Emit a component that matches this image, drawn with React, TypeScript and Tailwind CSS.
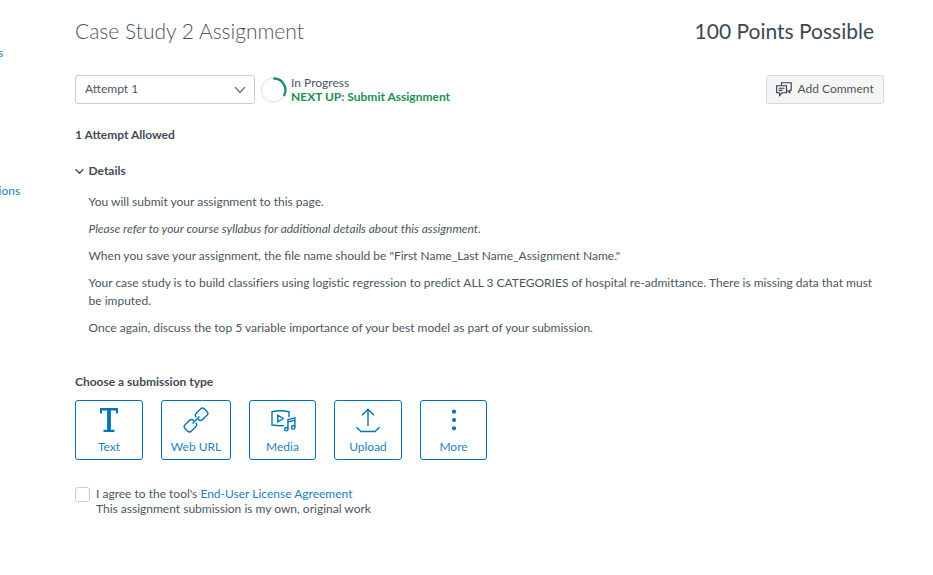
import React from "react";

function TypeButton({ label, width, children }: { label: string; width: string; children: React.ReactNode }) {
  return (
    <button className={`flex h-[60px] flex-col items-center rounded-[3px] border border-[#0374b5] bg-white pt-[6px] text-[#0374b5] ${width}`}>
      <svg width="26" height="26" viewBox="0 0 26 26" fill="none" stroke="currentColor" strokeWidth="1.4">
        {children}
      </svg>
      <span className="mt-[5px] text-[12px] leading-[18px] text-[#2383bd]">{label}</span>
    </button>
  );
}

export default function App() {
  return (
    <div className="flex h-[575px] w-[933px] overflow-hidden bg-white font-['Lato',sans-serif] text-[12px] leading-[18px] text-[#4a565f]">
      <nav className="flex w-[75px] shrink-0 flex-col pt-[44px] text-[#2383bd]">
        <a className="-ml-[2px]">s</a>
        <a className="mt-[120px] -ml-[1.5px]">ions</a>
      </nav>
      <main className="flex w-[809px] flex-col">
        <header className="flex h-[34px] items-start justify-between pt-[16px] pr-[10px] text-[21px] leading-[30px]">
          <h1 className="font-light">Case Study 2 Assignment</h1>
          <span className="text-[#3c4953]">100 Points Possible</span>
        </header>
        <div className="mt-[41px] flex h-[29px] items-center">
          <div className="flex h-[29px] w-[180px] items-center justify-between rounded-[3px] border border-[#c7cdd1] pr-[8px] pl-[9px]">
            <span className="-mt-[2px]">Attempt 1</span>
            <svg width="12" height="8" viewBox="0 0 12 8" fill="none" stroke="currentColor" strokeWidth="1.1">
              <path d="M1 1.2 6 6.4 11 1.2" />
            </svg>
          </div>
          <svg className="ml-[5px]" width="28" height="28" viewBox="0 0 28 28" fill="none">
            <circle cx="13.3" cy="14" r="11.9" stroke="#e3e6e8" strokeWidth="1.2" />
            <path d="M13.3 2.5A11.6 11.6 0 0 1 23.8 20" stroke="#16925a" strokeWidth="2.3" />
          </svg>
          <div className="ml-[3px] flex flex-col leading-[14px]">
            <span>In Progress</span>
            <span className="font-bold text-[#1a8e56]">NEXT UP: Submit Assignment</span>
          </div>
          <button className="ml-auto flex h-[29px] w-[118px] items-center rounded-[3px] border border-[#d7dadc] bg-[#f5f5f5] pl-[9px]">
            <svg width="16" height="15" viewBox="0 0 16 15" fill="none" stroke="#2d3b45" strokeWidth="1.1">
              <path d="M5.5 3.2V.8H15.2V8.3H13.8V10.6L11.4 8.3" />
              <path d="M.7 3.8H10.5V10.8H6L3.5 13.6V10.8H.7ZM2.7 6.2H8.5M2.7 8.4H6.5" />
            </svg>
            <span className="-mt-[2px] ml-[5.5px]">Add Comment</span>
          </button>
        </div>
        <div className="mt-[22px] font-bold text-[#3f4c55]">1 Attempt Allowed</div>
        <div className="mt-[18px] flex items-center font-bold text-[#3f4c55]">
          <svg width="9" height="7" viewBox="0 0 9 7" fill="none" stroke="currentColor" strokeWidth="1.3">
            <path d="M.6 1.2 4.5 5.2 8.4 1.2" />
          </svg>
          <span className="ml-[4.5px]">Details</span>
        </div>
        <section className="mt-[13px] ml-[13.5px] flex flex-col gap-[9px]">
          <p>You will submit your assignment to this page.</p>
          <p className="italic">Please refer to your course syllabus for additional details about this assignment.</p>
          <p>When you save your assignment, the file name should be "First Name_Last Name_Assignment Name."</p>
          <p className="tracking-[0.006px]">Your case study is to build classifiers using logistic regression to predict ALL 3 CATEGORIES of hospital re-admittance. There is missing data that must<br />be imputed.</p>
          <p>Once again, discuss the top 5 variable importance of your best model as part of your submission.</p>
        </section>
        <h2 className="mt-[36px] font-bold text-[#3f4c55]">Choose a submission type</h2>
        <div className="mt-[9px] flex gap-[18px]">
          <TypeButton label="Text" width="w-[68px]">
            <path fill="currentColor" stroke="none" d="M4 1H22V6.5H20V3.4H14.9V22.7H18.5V25H7.5V22.7H11.1V3.4H6V6.5H4Z" />
          </TypeButton>
          <TypeButton label="Web URL" width="w-[70px]">
            <path transform="translate(18.6 7.3) rotate(-45)" d="M-5.8 1V1.7Q-5.8 4.5-3 4.5H3Q5.8 4.5 5.8 1.7V-1.7Q5.8-4.5 3-4.5H-3Q-5.8-4.5-5.8-1.7" />
            <path transform="translate(7.4 18.7) rotate(135)" d="M-5.8 1V1.7Q-5.8 4.5-3 4.5H3Q5.8 4.5 5.8 1.7V-1.7Q5.8-4.5 3-4.5H-3Q-5.8-4.5-5.8-1.7" />
            <path d="M9.5 16.5 16.5 9.5" />
          </TypeButton>
          <TypeButton label="Media" width="w-[67px]">
            <path d="M14 18.6Q8 19 2 18V4.8Q10.5 2.8 19 4.8V10M7.8 8.2V14.8L13.3 11.5Z" />
            <path d="M17.9 22V12.6L24.9 10.8V20.3M17.9 15 24.9 13.1" />
            <circle cx="16.3" cy="22.2" r="1.7" /><circle cx="23.2" cy="20.5" r="1.7" />
          </TypeButton>
          <TypeButton label="Upload" width="w-[68px]">
            <path d="M13 19V3M7 8.3 13 2.3 19 8.3M1.5 20.3 6 24.5H20L24.5 20.3" />
          </TypeButton>
          <TypeButton label="More" width="w-[67px]">
            <g fill="currentColor" stroke="none"><circle cx="13" cy="4.7" r="2.1" /><circle cx="13" cy="13" r="2.1" /><circle cx="13" cy="21.3" r="2.1" /></g>
          </TypeButton>
        </div>
        <div className="mt-[27px] flex leading-[15px]">
          <span className="h-[15px] w-[15px] rounded-[3px] border border-[#c7cdd1]" />
          <div className="-mt-px ml-[6px]">
            <p>I agree to the tool's <a className="text-[#1a7fbb]">End-User License Agreement</a></p>
            <p>This assignment submission is my own, original work</p>
          </div>
        </div>
      </main>
    </div>
  );
}
